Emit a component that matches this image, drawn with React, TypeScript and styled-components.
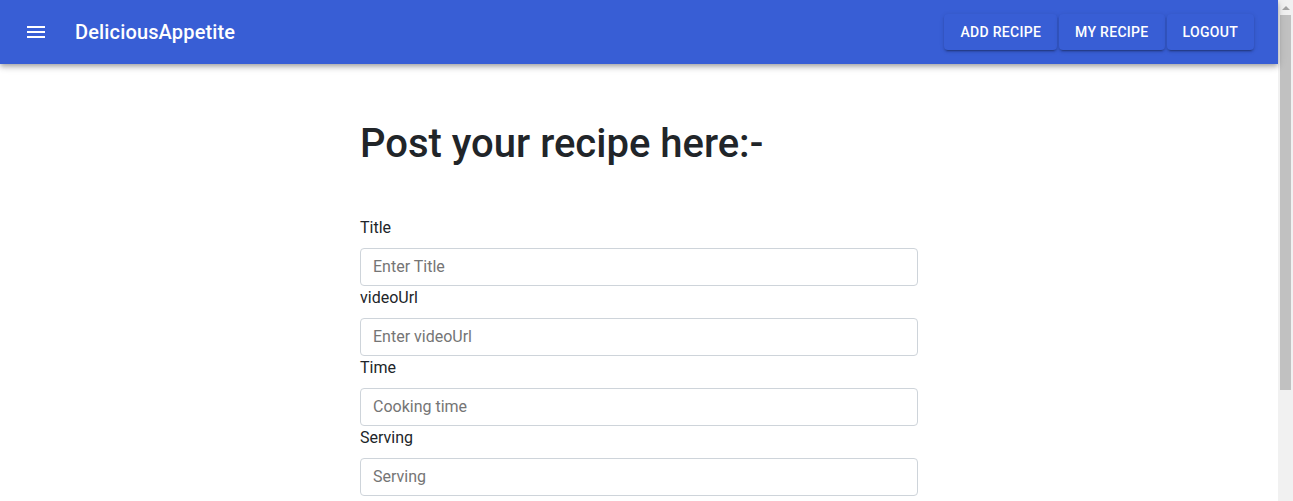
import React from 'react';
import styled, { createGlobalStyle } from 'styled-components';

const GlobalStyle = createGlobalStyle`
  body {
    margin: 0;
    font-family: Roboto, "Liberation Sans", sans-serif;
    color: #212529;
    background: #fff;
    overflow: hidden;
  }
`;

const Window = styled.div`
  height: 100vh;
  display: flex;
  overflow: hidden;
`;

const Viewport = styled.div`
  flex: 1;
  min-width: 0;
`;

const ScrollTrack = styled.div`
  width: 15px;
  flex: none;
  background: #f1f1f1;
  display: flex;
  flex-direction: column;
  align-items: center;
`;

const ScrollArrow = styled.div`
  height: 15px;
  width: 15px;
  display: flex;
  align-items: center;
  justify-content: center;

  &::before {
    content: '';
    border-left: 4px solid transparent;
    border-right: 4px solid transparent;
    border-bottom: 4px solid #a3a3a3;
  }
`;

const ScrollThumb = styled.div`
  width: 11px;
  height: 375px;
  background: #c1c1c1;
`;

const AppBar = styled.header`
  height: 64px;
  background: #385ed5;
  color: #fff;
  display: flex;
  align-items: center;
  padding: 0 24px;
  box-shadow: 0 2px 4px -1px rgba(0, 0, 0, 0.2), 0 4px 5px 0 rgba(0, 0, 0, 0.14),
    0 1px 10px 0 rgba(0, 0, 0, 0.12);
  position: relative;
  z-index: 2;
`;

const MenuButton = styled.button`
  width: 48px;
  height: 48px;
  margin-left: -12px;
  margin-right: 15px;
  padding: 12px;
  border: none;
  background: transparent;
  color: #fff;
  display: flex;
  align-items: center;
  justify-content: center;
`;

const Brand = styled.div`
  flex: 1;
  font-size: 20px;
  font-weight: 500;
  letter-spacing: 0.15px;
`;

const Nav = styled.nav`
  display: flex;
  gap: 2px;
`;

const NavButton = styled.button`
  height: 36px;
  padding: 6px 16px;
  border: none;
  border-radius: 4px;
  background: #385ed5;
  color: #fff;
  font-family: Roboto, "Liberation Sans", sans-serif;
  font-size: 14px;
  font-weight: 500;
  letter-spacing: 0.3px;
  text-transform: uppercase;
  box-shadow: 0 3px 1px -2px rgba(0, 0, 0, 0.2), 0 2px 2px 0 rgba(0, 0, 0, 0.14),
    0 1px 5px 0 rgba(0, 0, 0, 0.12);
`;

const Main = styled.main`
  width: 558px;
  margin: 0 auto;
  padding: 56px 0 60px;
`;

const Heading = styled.h2`
  margin: 0 0 48px;
  font-size: 40px;
  font-weight: 500;
  line-height: 1.2;
`;

const Form = styled.form`
  display: flex;
  flex-direction: column;
`;

const Label = styled.label`
  font-size: 16px;
  line-height: 24px;
  margin-bottom: 8px;
`;

const Input = styled.input`
  box-sizing: border-box;
  height: 38px;
  width: 100%;
  padding: 5px 12px 7px;
  border: 1px solid #ced4da;
  border-radius: 4px;
  font-family: Roboto, "Liberation Sans", sans-serif;
  font-size: 16px;
  line-height: 24px;
  color: #212529;

  ::placeholder {
    color: #6c757d;
  }
`;

const fields = [
  { label: 'Title', placeholder: 'Enter Title' },
  { label: 'videoUrl', placeholder: 'Enter videoUrl' },
  { label: 'Time', placeholder: 'Cooking time' },
  { label: 'Serving', placeholder: 'Serving' },
];

const MenuIcon = () => (
  <svg width="24" height="24" viewBox="0 0 24 24" fill="currentColor">
    <path d="M3 18h18v-2H3v2zm0-5h18v-2H3v2zm0-7v2h18V6H3z" />
  </svg>
);

const App = () => (
  <Window>
    <GlobalStyle />
    <Viewport>
      <AppBar>
        <MenuButton aria-label="menu">
          <MenuIcon />
        </MenuButton>
        <Brand>DeliciousAppetite</Brand>
        <Nav>
          <NavButton>Add Recipe</NavButton>
          <NavButton>My Recipe</NavButton>
          <NavButton>Logout</NavButton>
        </Nav>
      </AppBar>
      <Main>
        <Heading>Post your recipe here:-</Heading>
        <Form>
          {fields.map((f) => (
            <React.Fragment key={f.label}>
              <Label>{f.label}</Label>
              <Input placeholder={f.placeholder} />
            </React.Fragment>
          ))}
        </Form>
      </Main>
    </Viewport>
    <ScrollTrack>
      <ScrollArrow />
      <ScrollThumb />
    </ScrollTrack>
  </Window>
);

export default App;
